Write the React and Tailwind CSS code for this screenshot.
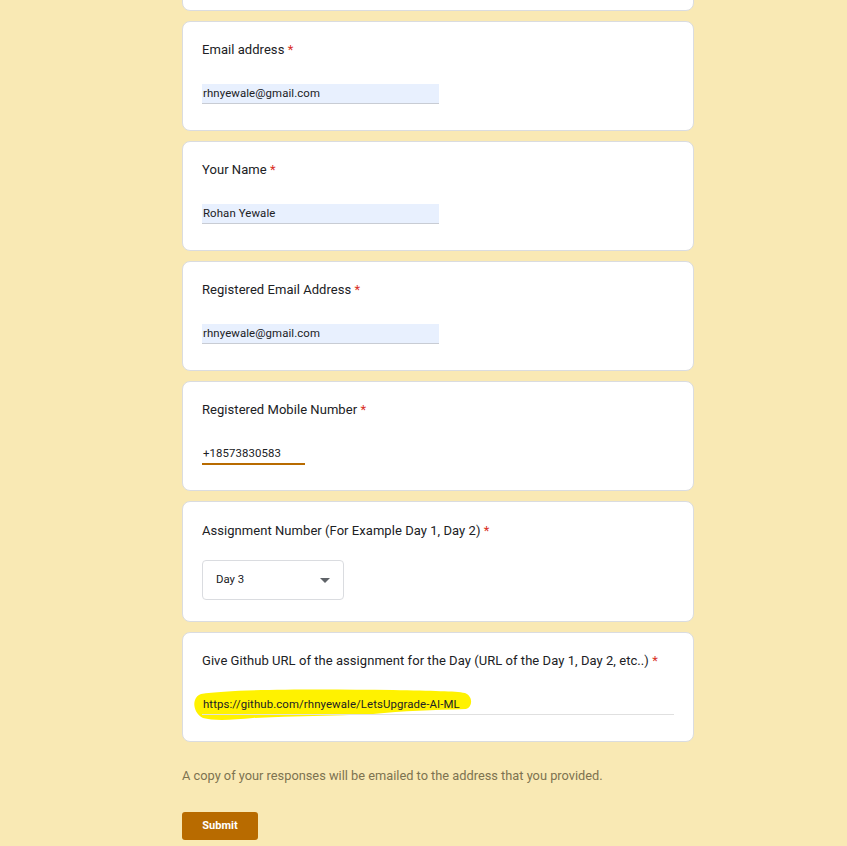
import React from "react";

function Label({ children }) {
  return (
    <div className="whitespace-nowrap text-[13px] leading-[20px] text-[#202124] font-['Roboto',sans-serif] tracking-[0.05px]">
      {children} <span className="text-[#d93025]">*</span>
    </div>
  );
}

function Card({ children, h = "h-[110px]" }) {
  return (
    <div className={`${h} w-[512px] rounded-[8px] border border-[#dadce0] bg-white px-[19px] pt-[18px]`}>
      {children}
    </div>
  );
}

function FilledInput({ value }) {
  return (
    <div className="mt-[24px] w-[237px]">
      <div className="h-[19px] bg-[#e8f0fe] pl-[1px] text-[11.4px] leading-[19px] text-[#202124] font-['Roboto',sans-serif] tracking-[0.1px]">
        {value}
      </div>
      <div className="h-[1px] bg-[#c8ccd4]" />
    </div>
  );
}

export default function App() {
  return (
    <div className="min-h-[846px] w-[847px] overflow-hidden bg-[#f9e9b4] font-['Roboto',sans-serif]">
      <div className="ml-[182px] flex w-[512px] flex-col gap-[10px] -mt-[100px]">
        <Card h="h-[111px]">
          <div />
        </Card>
        <Card>
          <Label>Email address</Label>
          <FilledInput value="rhnyewale@gmail.com" />
        </Card>
        <Card>
          <Label>Your Name</Label>
          <FilledInput value="Rohan Yewale" />
        </Card>
        <Card>
          <Label>Registered Email Address</Label>
          <FilledInput value="rhnyewale@gmail.com" />
        </Card>
        <Card>
          <Label>Registered Mobile Number</Label>
          <div className="mt-[24px] w-[103px]">
            <div className="h-[19px] pl-[1px] text-[11.4px] leading-[19px] text-[#202124] tracking-[0.1px]">+18573830583</div>
            <div className="h-[2px] bg-[#b86b00]" />
          </div>
        </Card>
        <Card h="h-[121px]">
          <div className="pt-[1px]">
            <Label>Assignment Number (For Example Day 1, Day 2)</Label>
          </div>
          <div className="mt-[19px] flex h-[40px] w-[142px] items-center justify-between rounded-[4px] border border-[#dadce0] pl-[13px] pr-[13px]">
            <span className="text-[11.4px] text-[#202124]">Day 3</span>
            <svg width="10" height="5" viewBox="0 0 10 5">
              <path d="M0 0 L10 0 L5 5 Z" fill="#5f6368" />
            </svg>
          </div>
        </Card>
        <Card>
          <Label>Give Github URL of the assignment for the Day (URL of the Day 1, Day 2, etc..)</Label>
          <div className="relative mt-[24px] w-[472px]">
            <svg className="absolute left-[-9px] top-[-8px]" width="282" height="36" viewBox="0 0 282 36">
              <path
                d="M8 7 C40 2 120 2 200 3 C240 4 262 4 272 6 C280 9 280 20 273 22 C240 23 210 24 180 27 C140 29 100 29 60 31 C40 33 20 34 10 31 C2 27 0 18 2 13 C3 10 5 8 8 7 Z"
                fill="#fff200"
              />
            </svg>
            <div className="relative h-[19px] pl-[1px] text-[11.4px] leading-[19px] text-[#202124] tracking-[0.1px]">
              https://github.com/rhnyewale/LetsUpgrade-AI-ML
            </div>
            <div className="relative h-[1px] bg-[#e0e0e0]" />
          </div>
        </Card>
        <div className="mt-[14px] text-[12.8px] leading-[20px] text-[#7d7350]">
          A copy of your responses will be emailed to the address that you provided.
        </div>
        <div className="mt-[16px]">
          <button className="h-[28px] w-[76px] rounded-[3px] bg-[#b86b00] text-[11px] font-bold text-white">
            Submit
          </button>
        </div>
      </div>
    </div>
  );
}
